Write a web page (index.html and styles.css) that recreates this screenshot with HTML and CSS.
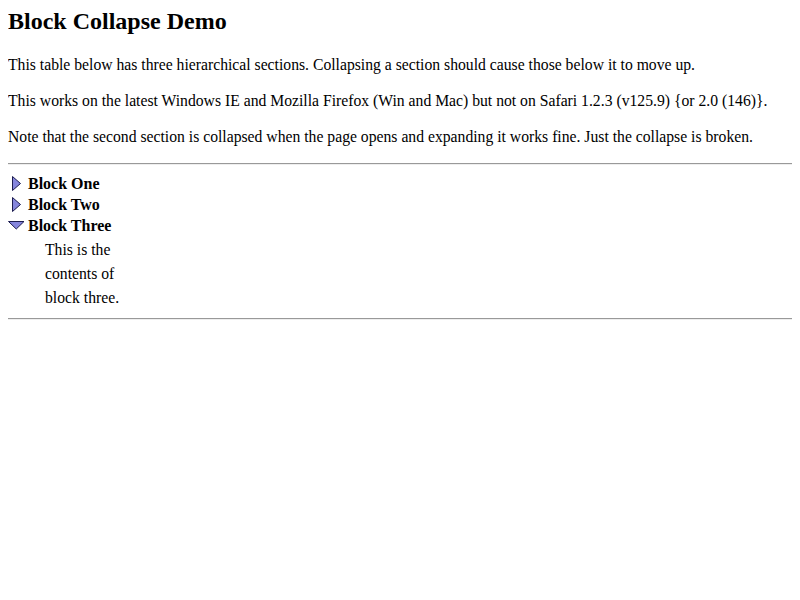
FILE: index.html
```html
<!DOCTYPE html>
<html>
<head>
<meta charset="utf-8">
<title>Block Collapse Demo</title>
<link rel="stylesheet" href="styles.css">
</head>
<body>
<h1 class="title">Block Collapse Demo</h1>
<p class="note">This table below has three hierarchical sections. Collapsing a section should cause those below it to move up.</p>
<p class="note">This works on the latest Windows IE and Mozilla Firefox (Win and Mac) but not on Safari 1.2.3 (v125.9) {or 2.0 (146)}.</p>
<p class="note">Note that the second section is collapsed when the page opens and expanding it works fine. Just the collapse is broken.</p>
<hr class="rule rule-top">
<div class="blocks">
  <div class="block">
    <div class="block-head">
      <svg class="twisty" width="16" height="18" viewBox="0 0 16 18"><polygon points="4.5,1.5 12.5,8.5 4.5,15.5" fill="#8585dc" stroke="#1c1c50" stroke-width="1"/></svg>
      <span class="block-title">Block One</span>
    </div>
  </div>
  <div class="block">
    <div class="block-head">
      <svg class="twisty" width="16" height="18" viewBox="0 0 16 18"><polygon points="4.5,1.5 12.5,8.5 4.5,15.5" fill="#8585dc" stroke="#1c1c50" stroke-width="1"/></svg>
      <span class="block-title">Block Two</span>
    </div>
  </div>
  <div class="block">
    <div class="block-head">
      <svg class="twisty" width="16" height="18" viewBox="0 0 16 18"><polygon points="0.5,4.5 16,4.5 8.25,12" fill="#8585dc" stroke="#1c1c50" stroke-width="1"/></svg>
      <span class="block-title">Block Three</span>
    </div>
    <div class="block-body">
      <div class="line">This is the</div>
      <div class="line">contents of</div>
      <div class="line">block three.</div>
    </div>
  </div>
</div>
<hr class="rule rule-bottom">
</body>
</html>
```

FILE: styles.css
```css
body {
  margin: 8px;
  font-family: "Liberation Serif", "Times New Roman", serif;
  font-size: 16px;
  color: #000;
  background: #fff;
}
.title {
  font-size: 24px;
  font-weight: bold;
  margin: 0 0 21px;
  line-height: 26px;
}
.note {
  margin: 16px 0;
  line-height: 20px;
  font-size: 15.7px;
}
.rule {
  border: 0;
  border-top: 1px solid #999;
  border-bottom: 1px solid #eee;
  height: 0;
}
.rule-top {
  margin: 16px 0 8px;
}
.rule-bottom {
  margin: 8px 0;
}
.blocks {
  display: flex;
  flex-direction: column;
}
.block-head {
  display: flex;
  align-items: center;
  height: 21px;
}
.twisty {
  display: block;
  margin-right: 4px;
}
.block-title {
  font-weight: bold;
}
.block-body {
  padding-left: 37px;
  padding-top: 2px;
  font-size: 15.7px;
}
.line {
  line-height: 24px;
}
```
